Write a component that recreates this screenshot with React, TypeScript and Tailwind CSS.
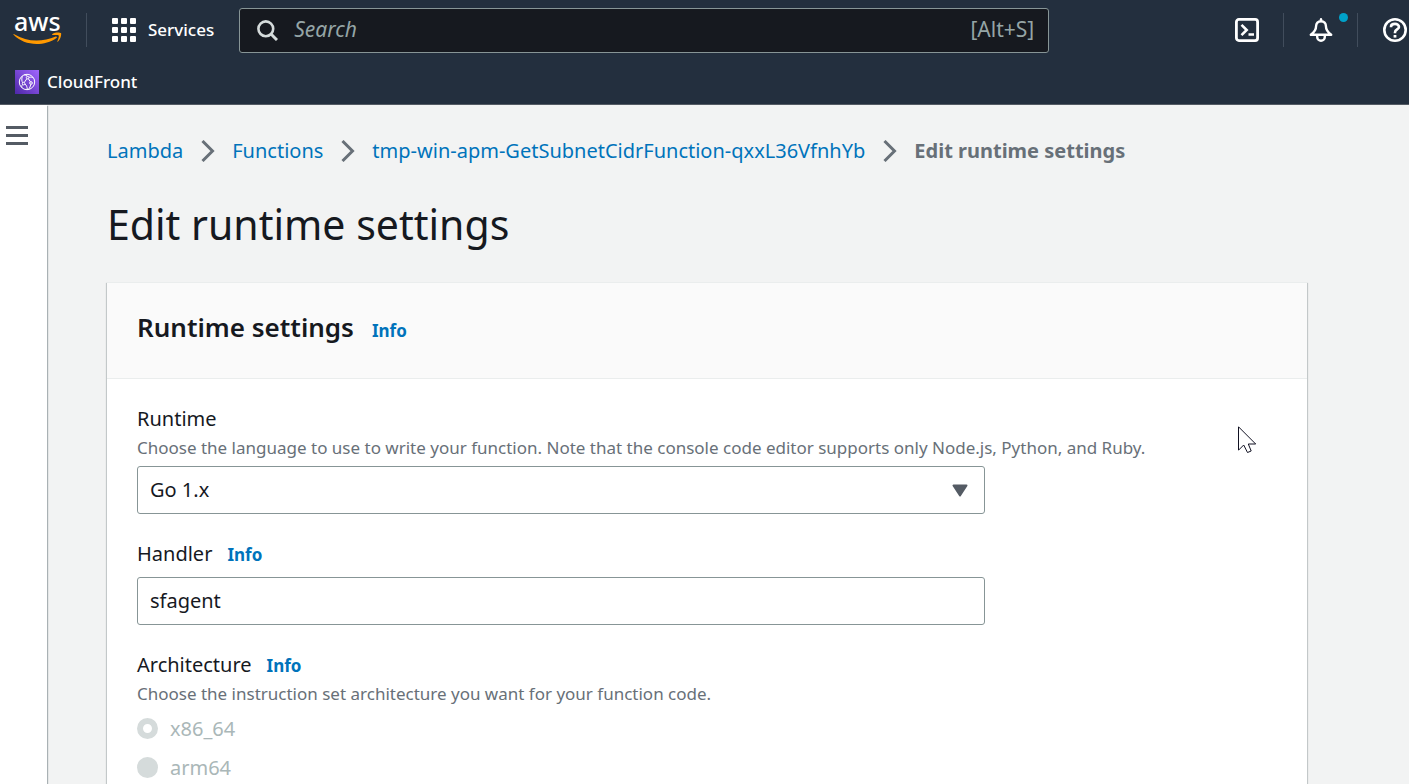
import type { ReactNode } from "react";

function AwsLogo() {
  return (
    <svg width="50" height="60" viewBox="0 -13 50 60" aria-hidden="true">
      <text
        x="1"
        y="18"
        className="fill-white font-['Noto_Sans',sans-serif] text-[25px] font-medium"
      >
        aws
      </text>
      <path
        d="M0.6 21.8C0.2 21.4 0.6 20.9 1.2 21.2C8.5 25.3 15.5 27.6 23.5 27.6C30 27.6 36.500 26.200 42.700 23.600C43.700 23.200 44.400 24.300 43.500 25C37.800 29.200 30.500 31 23.600 31C14.700 31 6.600 27.900 0.600 21.800Z"
        fill="#ff9900"
      />
      <path
        d="M39.400 20.900C42.500 18.800 47.300 19.300 48 20.100C48.600 20.900 47.800 26.200 45 28.600C44.600 29 44.100 28.800 44.300 28.300C45 26.700 46.300 23.300 45.700 22.400C45.100 21.600 41.700 21.900 40 22.100C39.200 22.100 38.800 21.300 39.400 20.900Z"
        fill="#ff9900"
      />
    </svg>
  );
}

function GridIcon() {
  return (
    <svg width="24" height="24" viewBox="0 0 24 24" fill="#fff" aria-hidden="true">
      {[0, 9, 18].map((y) =>
        [0, 9, 18].map((x) => (
          <rect key={`${x}-${y}`} x={x} y={y} width="6" height="6" rx="1" />
        )),
      )}
    </svg>
  );
}

function SearchIcon() {
  return (
    <svg width="21" height="21" viewBox="0 0 21 21" fill="none" stroke="#d5dbdb" strokeWidth="2.600" aria-hidden="true">
      <circle cx="8.800" cy="8.800" r="7.400" />
      <path d="M14 14L20 20" strokeWidth="3" />
    </svg>
  );
}

function ShellIcon() {
  return (
    <svg width="24" height="24" viewBox="0 0 24 24" fill="none" stroke="#fff" strokeWidth="2.800" aria-hidden="true">
      <rect x="1.400" y="1.400" width="21.200" height="21.200" rx="2.500" />
      <path d="M6.500 6.800L11.700 12L6.500 17.200M13.500 16.500H19" strokeWidth="2.600" />
    </svg>
  );
}

function BellIcon() {
  return (
    <svg width="24" height="24" viewBox="0 0 24 24" fill="none" stroke="#fff" aria-hidden="true">
      <path
        d="M12 3.200C8.900 3.200 7.100 5.300 7.100 8C7.100 11.500 5 14.500 1.800 16.800H22.200C19 14.500 16.900 11.500 16.900 8C16.900 5.300 15.100 3.200 12 3.200Z"
        strokeWidth="2.400"
        strokeLinejoin="round"
      />
      <path d="M12 1.200V3" strokeWidth="2.400" strokeLinecap="round" />
      <path d="M8.200 17.500V19C8.200 21.300 10 22.700 12 22.700C14 22.700 15.800 21.300 15.800 19V17.500" strokeWidth="2.400" />
    </svg>
  );
}

function HelpIcon() {
  return (
    <svg width="24" height="24" viewBox="0 0 24 24" fill="none" stroke="#fff" aria-hidden="true">
      <circle cx="12" cy="12" r="10.700" strokeWidth="2.600" />
      <path d="M8 9.300V8.800C8 7 9.800 5.900 12 5.900C14.200 5.900 16 7.200 16 9C16 11.300 12 11.600 12 14.200V15.200" strokeWidth="2.600" />
      <path d="M12 17V19.600" strokeWidth="2.800" />
    </svg>
  );
}

function CloudFrontIcon() {
  return (
    <svg width="24" height="24" viewBox="0 0 24 24" fill="none" aria-hidden="true">
      <defs>
        <linearGradient id="cf" x1="0" y1="24" x2="24" y2="0" gradientUnits="userSpaceOnUse">
          <stop stopColor="#4d27a8" />
          <stop offset="1" stopColor="#a166ff" />
        </linearGradient>
      </defs>
      <rect width="24" height="24" fill="url(#cf)" />
      <g stroke="#fff" strokeWidth="1">
        <circle cx="12" cy="12" r="7.700" />
        <circle cx="12.600" cy="7.600" r="1.300" />
        <circle cx="8.600" cy="13.600" r="1.300" />
        <circle cx="16" cy="13" r="1.300" />
        <path d="M11.800 8.800L9.300 12.400M13.400 8.800L15.400 11.800M9.900 13.900C11.400 15.200 12.200 17 12.300 19.500M12.400 6.300C11.500 5.200 10.300 4.900 9.200 4.900M7.500 14.500C6.700 15.700 6.500 16.700 7 17.700M15.800 14.300C15.500 16.300 14.700 18 13.500 19.400M13.900 7.300C15.800 7 17.300 7.200 18.100 7.700M7.600 12.700C6.800 11.300 6.500 9 7.300 6.200" />
      </g>
    </svg>
  );
}

function Chevron() {
  return (
    <svg width="14" height="22" viewBox="0 0 14 22" fill="none" stroke="#687078" strokeWidth="3" aria-hidden="true" className="shrink-0">
      <path d="M1.500 1L11.500 11L1.500 21" />
    </svg>
  );
}

function Pointer() {
  return (
    <svg width="19" height="28" viewBox="0 0 19 28" fill="#fff" stroke="#111122" strokeWidth="1" aria-hidden="true">
      <path d="M0.500 0.800V24.200L5.700 19L9.500 26.500L13.200 25L10.300 18H17.700Z" />
    </svg>
  );
}

function InfoLink() {
  return (
    <a href="#info" className="text-[17px] leading-none font-bold text-[#0073bb]">
      Info
    </a>
  );
}

function Divider() {
  return <span className="h-[34px] w-px bg-[#414d5c]" />;
}

function Crumb({ children }: { children: ReactNode }) {
  return (
    <li className="flex items-center gap-[18px]">
      <a href="#crumb" className="text-[#0073bb]">
        {children}
      </a>
      <Chevron />
    </li>
  );
}

function ArchOption({ label, checked }: { label: string; checked?: boolean }) {
  return (
    <label className="flex h-[33px] items-center gap-3 text-[20px] text-[#aab7b8]">
      <input
        type="radio"
        name="architecture"
        disabled
        defaultChecked={checked}
        className="size-[21px] appearance-none rounded-full bg-[#d5dbdb] checked:border-[6px] checked:border-[#d5dbdb] checked:bg-white"
      />
      {label}
    </label>
  );
}

export default function App() {
  return (
    <div className="flex h-screen flex-col overflow-hidden bg-[#f2f3f3] font-['Noto_Sans',sans-serif] text-[#16191f]">
      <header className="shrink-0 border-b border-[#545b64] bg-[#232f3e] text-white">
        <div className="flex h-[60px] items-center">
          <a href="#home" aria-label="AWS" className="ml-[13px]">
            <AwsLogo />
          </a>
          <span className="ml-[23px] flex">
            <Divider />
          </span>
          <button type="button" className="ml-[25px] flex items-center gap-3 text-[17px] font-medium">
            <GridIcon />
            Services
          </button>
          <div className="ml-[25px] flex h-[45px] max-w-[810px] flex-1 items-center gap-4 rounded-[3px] border border-[#879596] bg-[#16191f] pr-[14px] pl-[17px] text-[21px] text-[#95a5a6]">
            <SearchIcon />
            <input
              type="search"
              aria-label="Search"
              placeholder="Search"
              className="min-w-0 flex-1 bg-transparent italic outline-none placeholder:text-[#95a5a6]"
            />
            <span>[Alt+S]</span>
          </div>
          <div className="ml-auto flex items-center pr-[2px]">
            <button type="button" aria-label="CloudShell" className="mr-6">
              <ShellIcon />
            </button>
            <Divider />
            <button type="button" aria-label="Notifications" className="relative mr-6 ml-[25px]">
              <BellIcon />
              <span className="absolute -top-[5px] -right-[15px] size-[9px] rounded-full bg-[#00a1c9]" />
            </button>
            <Divider />
            <button type="button" aria-label="Help" className="ml-[25px]">
              <HelpIcon />
            </button>
          </div>
        </div>
        <div className="flex h-11 items-center pl-[15px]">
          <a href="#cloudfront" className="flex items-center gap-2 text-[17px] font-medium">
            <CloudFrontIcon />
            CloudFront
          </a>
        </div>
      </header>

      <div className="flex min-h-0 flex-1">
        <aside className="w-[47px] shrink-0 bg-white pt-[21px] pl-[6px] shadow-[1px_1px_1px_0_rgba(0,28,36,0.3)]">
          <button type="button" aria-label="Open navigation" className="flex flex-col gap-[5px]">
            <span className="h-[3px] w-[22px] bg-[#545b64]" />
            <span className="h-[3px] w-[22px] bg-[#545b64]" />
            <span className="h-[3px] w-[22px] bg-[#545b64]" />
          </button>
        </aside>

        <main className="min-w-0 flex-1 px-[60px] pt-[29px]">
          <nav aria-label="Breadcrumbs">
            <ol className="flex h-[33px] items-center gap-[17px] text-[20px] whitespace-nowrap">
              <Crumb>Lambda</Crumb>
              <Crumb>Functions</Crumb>
              <Crumb>tmp-win-apm-GetSubnetCidrFunction-qxxL36VfnhYb</Crumb>
              <li className="font-bold text-[#687078]">Edit runtime settings</li>
            </ol>
          </nav>
          <h1 className="mt-[27px] text-[41px] leading-[60px]">Edit runtime settings</h1>

          <section className="relative mt-7 max-w-[1200px] border-t border-[#eaeded] bg-white shadow-[0_1px_1px_0_rgba(0,28,36,0.3),1px_1px_1px_0_rgba(0,28,36,0.15),-1px_1px_1px_0_rgba(0,28,36,0.15)]">
            <header className="flex h-24 items-baseline gap-[18px] border-b border-[#eaeded] bg-[#fafafa] px-[30px] pt-[26px]">
              <h2 className="text-[26px] leading-9 font-semibold">Runtime settings</h2>
              <InfoLink />
            </header>
            <form className="px-[30px] pt-[23px]">
              <label htmlFor="runtime" className="block text-[20px] leading-[33px]">
                Runtime
              </label>
              <p className="mt-px text-[17px] leading-[24px] text-[#687078]">
                Choose the language to use to write your function. Note that the console code editor supports only Node.js, Python, and Ruby.
              </p>
              <div className="relative mt-[6px] max-w-[848px]">
                <select
                  id="runtime"
                  className="h-12 w-full appearance-none rounded-[3px] border border-[#879596] bg-white px-3 text-[20px]"
                >
                  <option>Go 1.x</option>
                </select>
                <svg width="16" height="13" viewBox="0 0 16 13" className="pointer-events-none absolute top-[18px] right-[17px]" aria-hidden="true">
                  <path d="M1.500 1.500H14.500L8 11.500Z" fill="#545b64" stroke="#545b64" strokeWidth="2" strokeLinejoin="round" />
                </svg>
              </div>

              <div className="mt-[23px] flex items-baseline gap-[15px] text-[20px] leading-[33px]">
                <label htmlFor="handler">Handler</label>
                <InfoLink />
              </div>
              <input
                id="handler"
                defaultValue="sfagent"
                className="mt-[7px] block h-12 w-full max-w-[848px] rounded-[3px] border border-[#879596] bg-white px-3 pb-[2px] text-[20px]"
              />

              <fieldset>
                <legend className="flex items-baseline gap-[15px] pt-[23px] text-[20px] leading-[33px]">
                  Architecture
                  <InfoLink />
                </legend>
                <p className="mt-px text-[17px] leading-[24px] text-[#687078]">
                  Choose the instruction set architecture you want for your function code.
                </p>
                <div className="mt-[6px] flex flex-col gap-[6px]">
                  <ArchOption label="x86_64" checked />
                  <ArchOption label="arm64" />
                </div>
              </fieldset>
            </form>
            <span className="pointer-events-none absolute top-[143px] right-[50px]">
              <Pointer />
            </span>
          </section>
        </main>
      </div>
    </div>
  );
}
